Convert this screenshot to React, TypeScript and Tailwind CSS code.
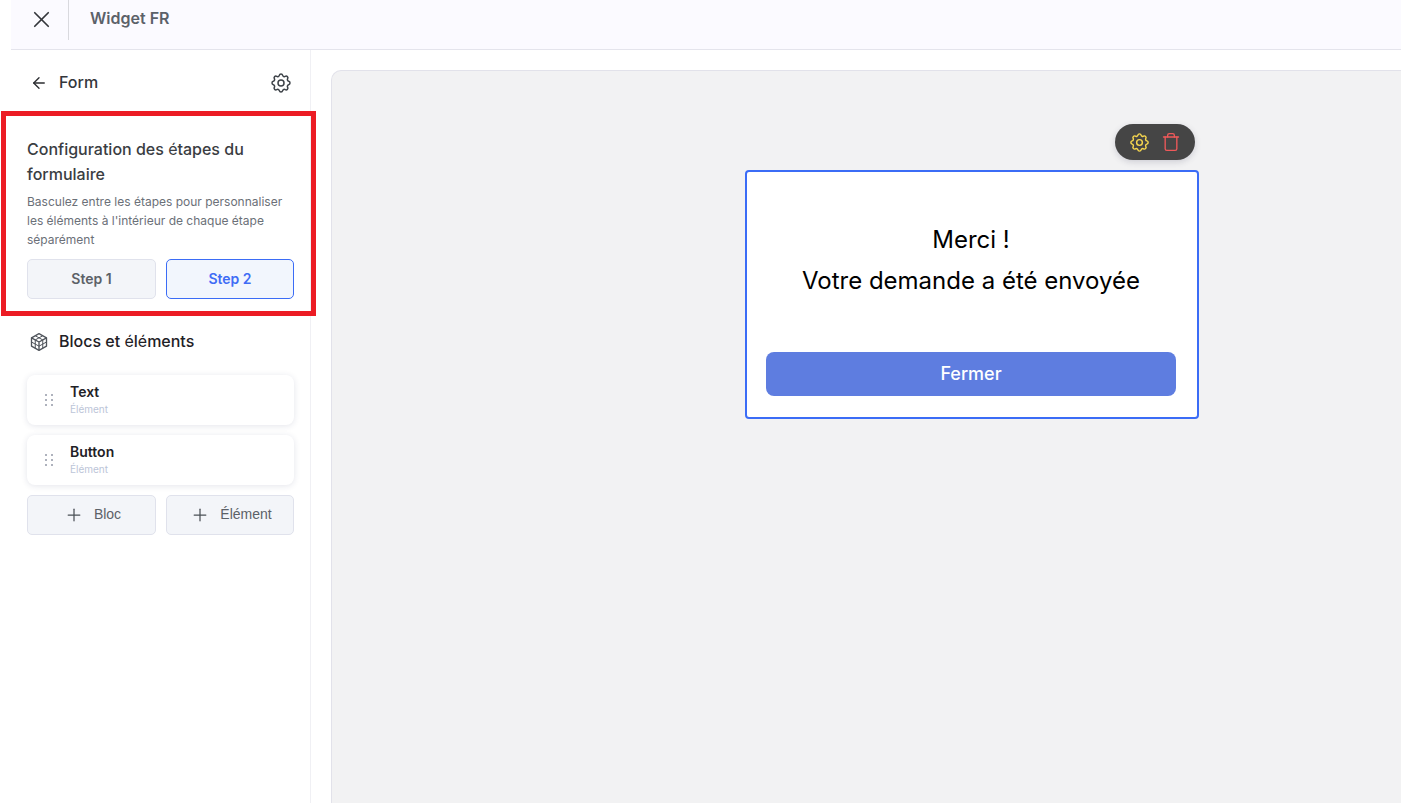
import { ArrowLeft, Plus, Trash, X } from 'lucide-react'
import { TbSettings } from 'react-icons/tb'

const FONT = "font-['Inter','Liberation_Sans',sans-serif]"

function Grip() {
  return (
    <svg width="10" height="14" viewBox="0 0 10 14" className="text-[#aeb2bd]" fill="currentColor">
      <rect x="0" y="1" width="2" height="2" />
      <rect x="6" y="1" width="2" height="2" />
      <rect x="0" y="6" width="2" height="2" />
      <rect x="6" y="6" width="2" height="2" />
      <rect x="0" y="11" width="2" height="2" />
      <rect x="6" y="11" width="2" height="2" />
    </svg>
  )
}

function GridCube() {
  return (
    <svg width="20" height="20" viewBox="0 0 24 24" fill="none" stroke="currentColor" strokeWidth="1.6" strokeLinejoin="round" className="mt-[2px] text-[#4f545b]">
      <path d="M12 2 21 7V17L12 22 3 17V7Z" />
      <path d="M3 7 12 12 21 7M12 12V22" />
      <path d="M7.5 4.5 16.5 9.5M16.5 4.5 7.5 9.5M7.5 9.5V19.5M16.5 9.5V19.5M3 12 12 17 21 12" strokeWidth="1.2" />
    </svg>
  )
}

function ElementCard({ title }: { title: string }) {
  return (
    <div className="flex h-[50px] items-center rounded-lg bg-white pl-[18px] shadow-[0_1px_6px_rgba(30,41,89,0.12)]">
      <Grip />
      <div className="ml-[15px] flex flex-col">
        <span className="-mt-[1px] text-[14px] leading-[18px] font-semibold text-[#1f2126]">{title}</span>
        <span className="mt-[1px] text-[10px] leading-[14px] text-[#bcc5d8]">Élément</span>
      </div>
    </div>
  )
}

function AddButton({ label, width }: { label: string; width: string }) {
  return (
    <button className={`flex h-10 ${width} items-center justify-center gap-[10px] rounded-[5px] border border-[#e0e2ec] bg-[#f3f5f9] pl-[2px] text-[#5c6168]`}>
      <Plus size={20} strokeWidth={1.5} className="text-[#4b5056]" />
      <span className="mb-[2px] font-['Liberation_Sans',sans-serif] text-[14px]">{label}</span>
    </button>
  )
}

export default function App() {
  return (
    <div className={`${FONT} flex h-[803px] w-[1401px] flex-col overflow-hidden bg-white pl-[11px]`}>
      {/* Top bar */}
      <header className="flex h-[50px] shrink-0 items-start border-b border-[#e4e4ec] bg-[#fbfaff]">
        <div className="flex h-10 w-[58px] items-center justify-center border-r border-[#d9d9de] pl-[4px] pb-[2px]">
          <X size={27} strokeWidth={1.5} className="text-[#33363b]" />
        </div>
        <span className="ml-[21px] mt-[7px] text-[16px] leading-[22px] font-semibold text-[#5b6169]">Widget FR</span>
      </header>

      <div className="flex min-h-0 flex-1">
        {/* Sidebar */}
        <aside className="flex w-[300px] shrink-0 flex-col border-r border-[#f0f0f4] px-4">
          <div className="flex h-[61px] shrink-0 items-center justify-between pl-[3px] pr-[1px] pt-[4px]">
            <div className="flex items-center gap-[11px]">
              <ArrowLeft size={18} strokeWidth={1.8} className="text-[#2b2d31]" />
              <span className="mb-[2px] text-[16px] leading-5 font-medium text-[#33363b]">Form</span>
            </div>
            <TbSettings size={24} strokeWidth={1.5} className="text-[#3d4248]" />
          </div>

          {/* Step switcher, with the red highlight frame */}
          <section className="-mx-[26px] -mr-[22px] flex h-[205px] shrink-0 flex-col border-[5px] border-[#ec1c24] pl-[21px] pr-[17px] pt-[21px]">
            <h2 className="text-[16px] leading-[25px] font-medium text-[#3a3d42]">
              Configuration des <span className="font-normal">é</span>tapes du
              <br />
              formulaire
            </h2>
            <p className="mt-[5px] text-[12px] leading-[19px] text-[#6b7078]">
              Basculez entre les étapes pour personnaliser les éléments à l'intérieur de chaque étape séparément
            </p>
            <div className="mt-[10px] flex gap-[10px]">
              <button className="h-10 w-[129px] rounded-[5px] border border-[#e0e2ec] bg-[#f3f5f9] pb-[2px] text-[14px] font-semibold text-[#5c6168]">Step 1</button>
              <button className="h-10 w-[128px] rounded-[5px] border border-[#3b6cf6] bg-[#f2f6fd] pb-[2px] text-[14px] font-semibold text-[#3f6cf5]">Step 2</button>
            </div>
          </section>

          <div className="mt-[14px] flex items-center gap-[10px] pl-[2px]">
            <GridCube />
            <span className="text-[16px] leading-[22px] font-medium text-[#1f2126]">
              Blocs et <span className="font-normal">é</span>l<span className="font-normal">é</span>ments
            </span>
          </div>

          <div className="mt-[23px] flex flex-col gap-[10px]">
            <ElementCard title="Text" />
            <ElementCard title="Button" />
          </div>

          <div className="mt-[10px] flex gap-[10px]">
            <AddButton label="Bloc" width="w-[129px]" />
            <AddButton label="Élément" width="w-[128px]" />
          </div>
        </aside>

        {/* Canvas */}
        <main className="min-w-0 flex-1 pl-5 pt-5">
          <div className="h-full rounded-tl-[10px] border-l border-t border-[#e2e2ea] bg-[#f2f2f3] pl-[413px] pt-[99px]">
            <div className="relative h-[249px] w-[454px] rounded-[4px] border-2 border-[#3b6cf6] bg-white">
              <div className="absolute -top-[48px] right-[2px] flex h-9 w-20 items-center justify-center gap-[10px] rounded-full bg-[#454545] pr-[2px] shadow-[0_2px_6px_rgba(60,60,90,0.2)]">
                <TbSettings size={23} strokeWidth={1.5} className="text-[#f8d84f]" />
                <Trash size={20} strokeWidth={1.6} className="text-[#f0595a]" />
              </div>
              <div className="pr-[2px] pt-[47px] text-center text-[24px] leading-[41px] text-black">
                <p>Merci !</p>
                <p>Votre demande a été envoyée</p>
              </div>
              <button className="mt-[51px] ml-[19px] block h-11 w-[410px] rounded-lg bg-[#5e7de0] pb-[2px] text-[18px] font-medium text-white">Fermer</button>
            </div>
          </div>
        </main>
      </div>
    </div>
  )
}
